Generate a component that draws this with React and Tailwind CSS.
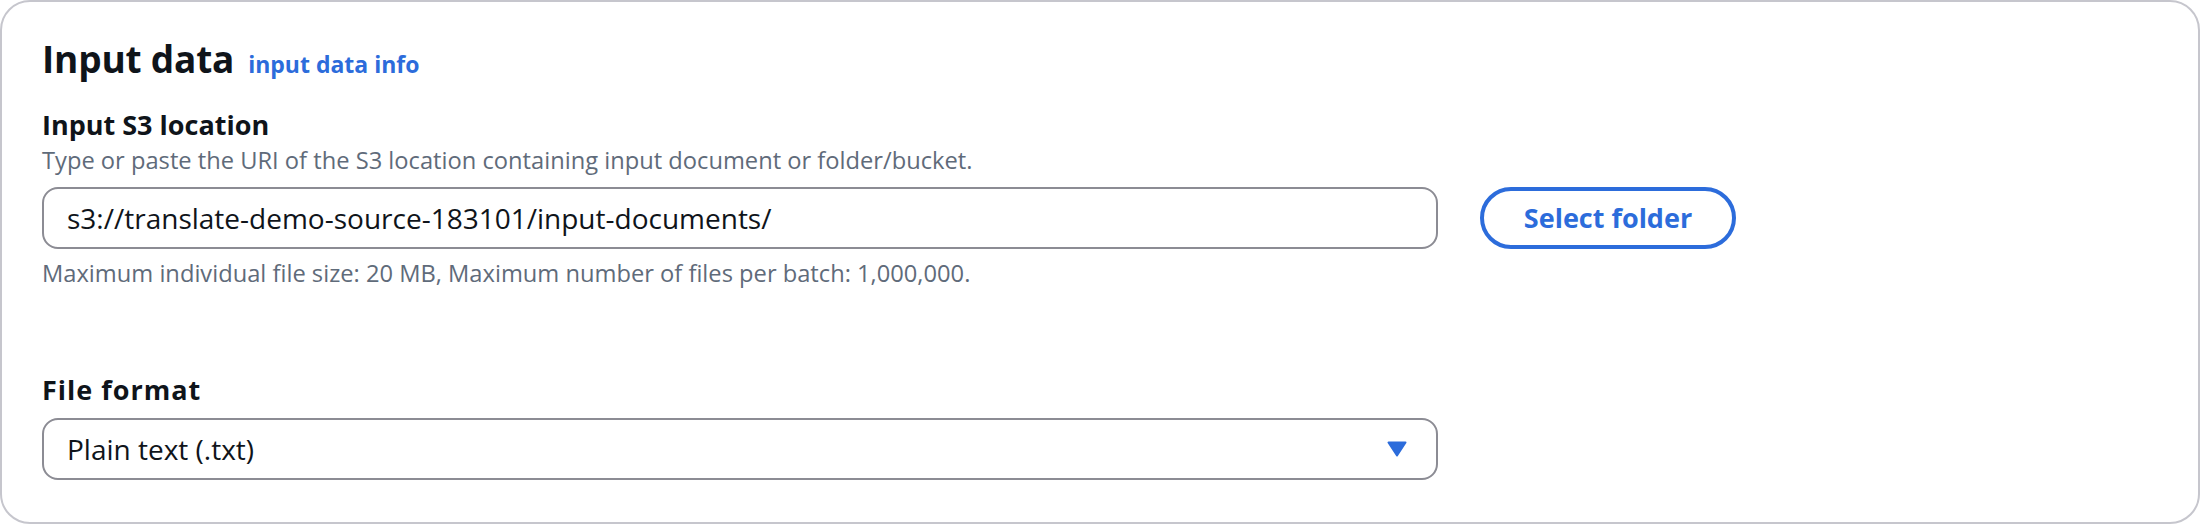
import React from "react";

export default function App() {
  return (
    <div className="w-[2200px] h-[524px] bg-white font-['Open_Sans',sans-serif]">
      <div className="box-border w-full h-full border-2 border-[#c6c6cd] rounded-[30px] bg-white pt-[35px] px-[40px]">
        <div className="flex items-baseline h-[44px]">
          <h2 className="text-[37px] leading-[44px] font-bold text-[#0f141a] tracking-[-0.2px]">Input data</h2>
          <a className="ml-[14px] text-[23px] leading-[24px] font-bold text-[#2c6cdb]">input data info</a>
        </div>

        <div className="mt-[28px] text-[27px] leading-[32px] font-bold text-[#0f141a]">Input S3 location</div>
        <div className="mt-[6px] text-[23.7px] leading-[26px] text-[#5f6b7a]">
          Type or paste the URI of the S3 location containing input document or folder/bucket.
        </div>

        <div className="mt-[14px] flex items-center gap-[42px]">
          <div className="box-border w-[1396px] h-[62px] border-2 border-[#8c8c94] rounded-[16px] pl-[23px] flex items-center text-[28px] text-[#0f141a]">
            s3://translate-demo-source-183101/input-documents/
          </div>
          <button className="box-border w-[256px] h-[62px] border-4 border-[#2c6cdb] rounded-full flex items-center justify-center text-[27px] font-bold text-[#2c6cdb] bg-white">
            Select folder
          </button>
        </div>

        <div className="mt-[11px] text-[23.7px] leading-[26px] text-[#5f6b7a]">
          Maximum individual file size: 20 MB, Maximum number of files per batch: 1,000,000.
        </div>

        <div className="mt-[88px] text-[27px] leading-[32px] font-bold text-[#0f141a] tracking-[1px]">File format</div>
        <div className="mt-[12px] box-border w-[1396px] h-[62px] border-2 border-[#8c8c94] rounded-[16px] pl-[23px] pr-[29px] flex items-center justify-between text-[28px] text-[#0f141a]">
          <span>Plain text (.txt)</span>
          <svg width="20" height="16" viewBox="0 0 20 16" aria-hidden="true">
            <path d="M1.5 1.5H18.5L10 14.5Z" fill="#2c6cdb" stroke="#2c6cdb" strokeWidth="2" strokeLinejoin="round" />
          </svg>
        </div>
      </div>
    </div>
  );
}
